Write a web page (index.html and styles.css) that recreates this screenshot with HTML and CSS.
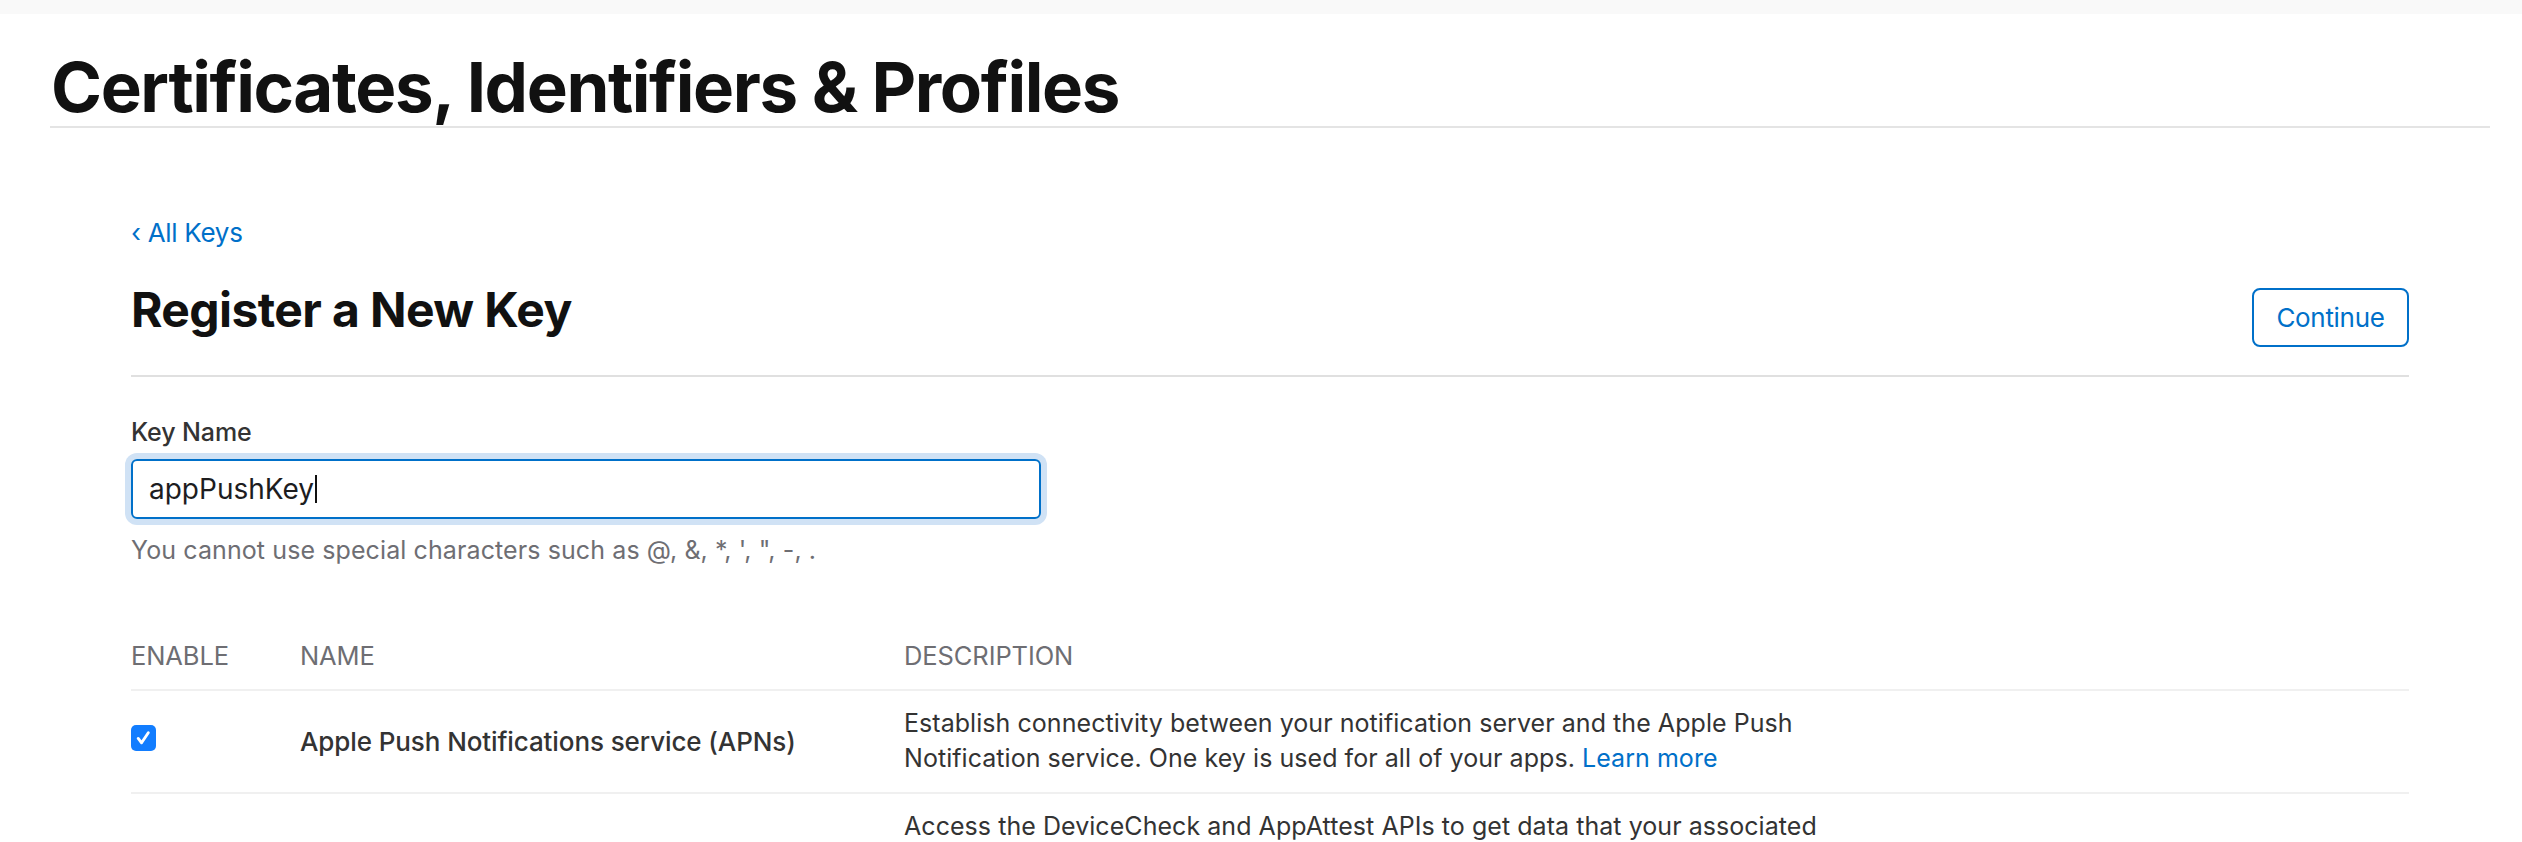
FILE: index.html
```html
<!DOCTYPE html>
<html lang="en">
<head>
<meta charset="utf-8">
<title>Register a New Key - Certificates, Identifiers &amp; Profiles</title>
<link rel="stylesheet" href="styles.css">
</head>
<body>
<div class="topbar"></div>
<div class="page">
  <h1 class="page-title">Certificates, Identifiers &amp; Profiles</h1>
  <div class="content">
    <a class="back-link" href="#"><span class="chev">‹</span> All Keys</a>
    <div class="header-row">
      <h2 class="section-title">Register a New Key</h2>
      <button class="btn-continue" type="button">Continue</button>
    </div>
    <label class="field-label">Key Name</label>
    <div class="input-box"><span class="input-text">appPushKey</span><span class="caret"></span></div>
    <p class="hint">You cannot use special characters such as @, &amp;, *, ', ", -, .</p>

    <div class="table">
      <div class="row head">
        <div class="cell">ENABLE</div>
        <div class="cell">NAME</div>
        <div class="cell">DESCRIPTION</div>
      </div>
      <div class="row">
        <div class="cell"><span class="checkbox"><svg viewBox="0 0 26 26" width="25" height="26"><path d="M7.5 13.5 L11 18 L18 7.5" fill="none" stroke="#fff" stroke-width="3" stroke-linecap="round" stroke-linejoin="round"/></svg></span></div>
        <div class="cell name">Apple Push Notifications service (APNs)</div>
        <div class="cell desc">Establish connectivity between your notification server and the Apple Push Notification service. One key is used for all of your apps. <a href="#">Learn more</a></div>
      </div>
      <div class="row">
        <div class="cell"></div>
        <div class="cell name"></div>
        <div class="cell desc">Access the DeviceCheck and AppAttest APIs to get data that your associated server can use in its business logic to protect your business.</div>
      </div>
    </div>
  </div>
</div>
</body>
</html>
```

FILE: styles.css
```css
* { box-sizing: border-box; }
html, body { margin: 0; padding: 0; background: #fff; }
body {
  font-family: Inter, "Liberation Sans", Arial, sans-serif;
  color: #333;
  overflow: hidden;
  height: 842px;
}
.topbar { height: 14px; background: #f9f9f9; }
.page { padding: 0 32px 0 50px; }
.page-title {
  margin: 34px 0 0;
  font-size: 69px;
  line-height: 78px;
  font-weight: 700;
  letter-spacing: -1.4px;
  color: #111;
  border-bottom: 2px solid #e4e4e4;
  padding-left: 1px;
}
.content { padding: 0 81px; }
.back-link {
  display: block;
  margin-top: 87px;
  font-size: 26px;
  line-height: 36px;
  color: #0070c9;
  text-decoration: none;
  letter-spacing: -0.3px;
}
.back-link .chev { display: inline-block; }
.header-row {
  display: flex;
  justify-content: space-between;
  align-items: flex-start;
  margin-top: 29px;
  padding-bottom: 28px;
  border-bottom: 2px solid #e0e0e0;
}
.section-title {
  margin: 0;
  font-size: 48px;
  line-height: 60px;
  font-weight: 700;
  letter-spacing: -0.6px;
  color: #111;
}
.btn-continue {
  margin-top: 8px;
  width: 157px;
  height: 59px;
  border: 2px solid #0070c9;
  border-radius: 8px;
  background: #fff;
  color: #0070c9;
  font-family: inherit;
  font-size: 26px;
  letter-spacing: -0.3px;
  padding: 0;
}
.field-label {
  display: block;
  margin-top: 40px;
  font-size: 25px;
  line-height: 30px;
  font-weight: 500;
  color: #333;
  letter-spacing: -0.1px;
}
.input-box {
  margin-top: 12px;
  width: 910px;
  height: 60px;
  border: 2px solid #0070c9;
  border-radius: 6px;
  box-shadow: 0 0 0 6px #d0e2f5;
  display: flex;
  align-items: center;
  padding-left: 16px;
  font-size: 28px;
  color: #1d1d1f;
  letter-spacing: 0;
}
.caret { display: inline-block; width: 2px; height: 28px; background: #111; margin-left: 1px; }
.hint {
  margin: 15px 0 0;
  font-size: 25px;
  line-height: 32px;
  color: #6e6e73;
  letter-spacing: 0.1px;
}
.table { margin-top: 73px; }
.row {
  display: grid;
  grid-template-columns: 169px 604px 1fr;
  border-bottom: 2px solid #f0f0f0;
  padding: 15px 0 16px;
  align-items: center;
}
.row.head { padding: 0 0 16px; }
.cell { font-size: 25px; line-height: 35px; letter-spacing: 0.05px; }
.row.head .cell { color: #6e6e73; font-weight: 400; font-size: 25.5px; line-height: 34px; letter-spacing: -0.1px; }
.name { font-weight: 500; color: #333; font-size: 26px; letter-spacing: -0.1px; }
.desc { max-width: 960px; color: #333; }
.desc a { color: #0070c9; text-decoration: none; }
.checkbox {
  display: block;
  width: 25px;
  height: 26px;
  border-radius: 5px;
  background: #127dff;
  margin-top: -6px;
}
.checkbox svg { display: block; }
```
